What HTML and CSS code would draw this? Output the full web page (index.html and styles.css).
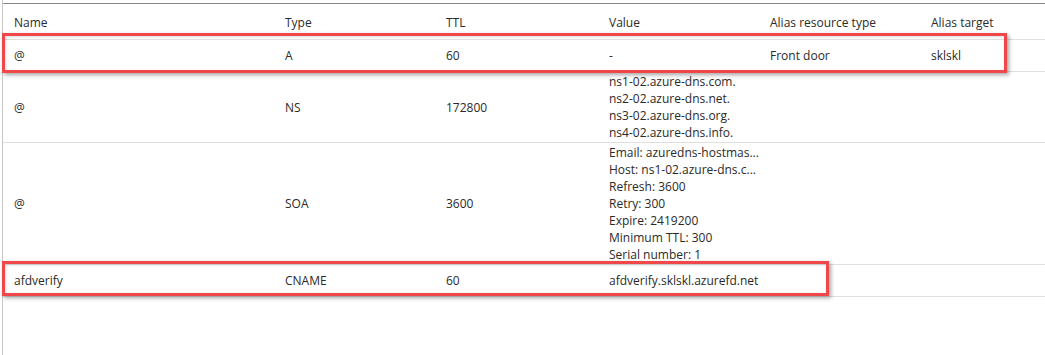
FILE: index.html
```html
<!DOCTYPE html>
<html>
<head>
<meta charset="utf-8">
<link rel="stylesheet" href="styles.css">
</head>
<body>
<div class="panel">
  <div class="table">
    <div class="row head">
      <div class="cell">Name</div>
      <div class="cell">Type</div>
      <div class="cell">TTL</div>
      <div class="cell">Value</div>
      <div class="cell">Alias resource type</div>
      <div class="cell">Alias target</div>
    </div>
    <div class="row single">
      <div class="cell">@</div>
      <div class="cell">A</div>
      <div class="cell">60</div>
      <div class="cell">-</div>
      <div class="cell">Front door</div>
      <div class="cell">sklskl</div>
      <div class="highlight hl-a"></div>
    </div>
    <div class="row multi ns">
      <div class="cell">@</div>
      <div class="cell">NS</div>
      <div class="cell">172800</div>
      <div class="cell lines">
        <div>ns1-02.azure-dns.com.</div>
        <div>ns2-02.azure-dns.net.</div>
        <div>ns3-02.azure-dns.org.</div>
        <div>ns4-02.azure-dns.info.</div>
      </div>
      <div class="cell"></div>
      <div class="cell"></div>
    </div>
    <div class="row multi soa">
      <div class="cell">@</div>
      <div class="cell">SOA</div>
      <div class="cell">3600</div>
      <div class="cell lines">
        <div>Email: azuredns-hostmas...</div>
        <div>Host: ns1-02.azure-dns.c...</div>
        <div>Refresh: 3600</div>
        <div>Retry: 300</div>
        <div>Expire: 2419200</div>
        <div>Minimum TTL: 300</div>
        <div>Serial number: 1</div>
      </div>
      <div class="cell"></div>
      <div class="cell"></div>
    </div>
    <div class="row single">
      <div class="cell">afdverify</div>
      <div class="cell">CNAME</div>
      <div class="cell">60</div>
      <div class="cell">afdverify.sklskl.azurefd.net</div>
      <div class="cell"></div>
      <div class="cell"></div>
      <div class="highlight hl-cname"></div>
    </div>
  </div>
</div>
</body>
</html>
```
FILE: styles.css
```css
html, body {
  margin: 0;
  padding: 0;
  background: #ffffff;
}
body {
  font-family: "Open Sans", "Liberation Sans", sans-serif;
  font-size: 12px;
  color: #2b2a29;
  overflow: hidden;
}
.panel {
  margin-left: 2px;
  border-left: 1px solid #c8c6c4;
  height: 355px;
  padding-top: 3px;
  box-sizing: border-box;
}
.table {
  border-top: 1px solid #8a8886;
}
.row {
  position: relative;
  display: grid;
  grid-template-columns: 271px 161px 163px 161px 161px 1fr;
  align-items: center;
  border-bottom: 1px solid #e1dfdd;
}
.row.head {
  height: 36px;
  box-sizing: border-box;
  padding-top: 2px;
}
.row.single {
  height: 31px;
}
.row.ns {
  height: 70px;
}
.row.soa {
  height: 121px;
}
.cell {
  padding-left: 11px;
  line-height: 17px;
  white-space: nowrap;
  overflow: hidden;
}
.lines div {
  line-height: 17px;
}
.highlight {
  position: absolute;
  left: -1px;
  box-sizing: border-box;
  border: 3px solid #f0474a;
  box-shadow: 2px 2px 4px rgba(0, 0, 0, 0.35), inset 1px 1px 3px rgba(0, 0, 0, 0.15);
  pointer-events: none;
}
.hl-a {
  top: -7px;
  width: 1005px;
  height: 40px;
}
.hl-cname {
  top: -4px;
  width: 827px;
  height: 35px;
}
```
